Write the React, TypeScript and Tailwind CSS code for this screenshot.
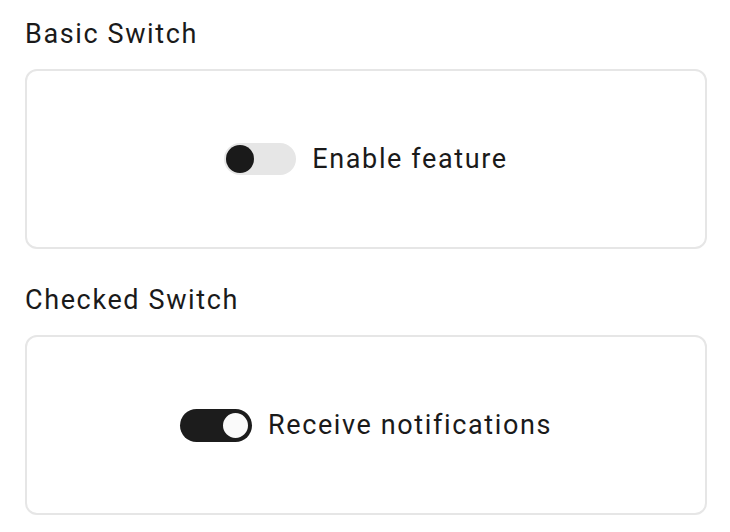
import React from "react";

function Switch({ checked }: { checked: boolean }) {
  return checked ? (
    <div className="relative w-[72px] h-[33px] rounded-full bg-[#1c1c1c] shrink-0">
      <div className="absolute right-[2px] top-[2px] w-[29px] h-[29px] rounded-full bg-[#fafafa] border-2 border-[#1c1c1c]" />
    </div>
  ) : (
    <div className="relative w-[72px] h-[32px] rounded-full bg-[#e6e6e6] shrink-0">
      <div className="absolute left-[2px] top-[2px] w-[28px] h-[28px] rounded-full bg-[#1a1a1a]" />
    </div>
  );
}

export default function App() {
  return (
    <div
      className="w-[730px] h-[532px] bg-white px-[25px] pt-[14px] text-[#1a1a1a]"
      style={{ fontFamily: "Roboto, 'Liberation Sans', sans-serif" }}
    >
      <div className="text-[27px] leading-[40px] tracking-[0.06em] mb-[15px]">Basic Switch</div>
      <div className="h-[180px] w-[682px] border-2 border-[#e6e6e6] rounded-[12px] flex items-center justify-center gap-[16px]">
        <Switch checked={false} />
        <span className="text-[27px] tracking-[0.06em]">Enable feature</span>
      </div>
      <div className="text-[27px] leading-[40px] tracking-[0.06em] mt-[31px] mb-[15px]">Checked Switch</div>
      <div className="h-[180px] w-[682px] border-2 border-[#e6e6e6] rounded-[12px] flex items-center justify-center gap-[16px]">
        <Switch checked={true} />
        <span className="text-[27px] tracking-[0.06em]">Receive notifications</span>
      </div>
    </div>
  );
}
